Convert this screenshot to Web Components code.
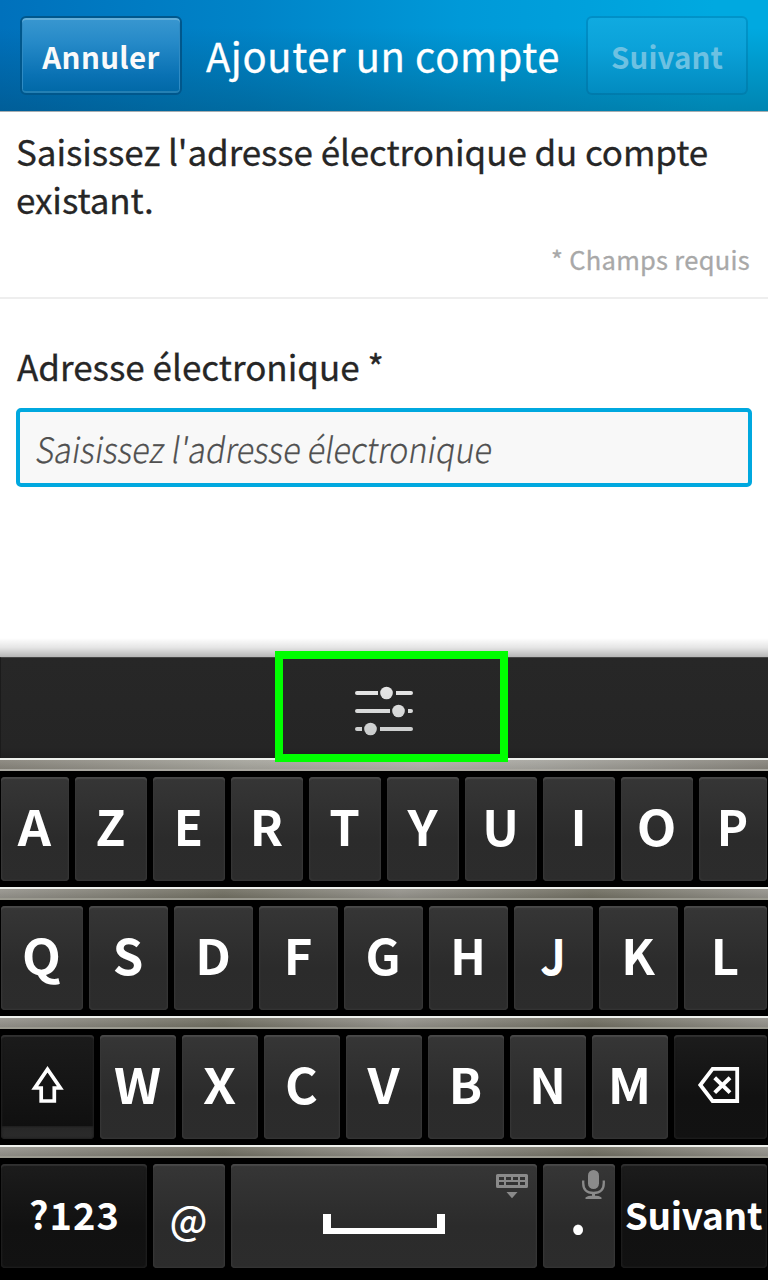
<!DOCTYPE html>
<html lang="fr">
<head>
<meta charset="utf-8">
<title>Ajouter un compte</title>
<style>
html,body{margin:0;padding:0}
body{width:768px;height:1280px;overflow:hidden;background:#fff;font-family:"Noto Sans CJK SC","Noto Sans",sans-serif;color:#262626}
</style>
</head>
<body>
<account-screen></account-screen>
<script>
const define = (name, html) => customElements.define(name, class extends HTMLElement {
  connectedCallback() {
    if (this.shadowRoot) return;
    const t = document.createElement('template');
    t.innerHTML = html;
    this.attachShadow({mode: 'open'}).append(t.content.cloneNode(true));
  }
});

define('title-action', `
<style>
:host{display:block;box-sizing:border-box;width:162px;height:79px;border:2px solid #00578c;border-radius:6px;
 background:linear-gradient(#3997d0,#268ac8 32%,#0a72b4 75%,#0068a6);
 box-shadow:inset 0 2px 0 #65afd9,inset 0 -2px 0 #2480b4,inset 1px 0 0 #2f8bc4,inset -1px 0 0 #2f8bc4}
div{height:75px;line-height:76px;text-align:center;font-size:29.5px;font-weight:700;color:#fafafa;letter-spacing:.35px;white-space:nowrap}
:host([disabled]){background:linear-gradient(#10aae0,#0ba2d9 40%,#028bc0) padding-box;box-shadow:none;border-color:rgba(0,92,140,.27)}
:host([disabled]) div{color:#6dc1e2;letter-spacing:.1px}
</style><div><slot></slot></div>`);

define('title-bar', `
<style>
:host{display:flex;box-sizing:border-box;height:112px;padding:16px 20px 0;justify-content:space-between;border-bottom:1px solid #a7adb0;
 background:linear-gradient(rgba(0,45,70,0) 25%,rgba(0,50,70,.3)),linear-gradient(90deg,#0071bc,#0084c8 33%,#0099d8 60%,#00a9e0 93%)}
h1{margin:0 2px 0 0;font-size:40px;line-height:79px;font-weight:400;color:#fff;white-space:nowrap;letter-spacing:.6px;-webkit-text-stroke:.3px #fff}
</style><slot name="left"></slot><h1><slot></slot></h1><slot name="right"></slot>`);

define('intro-text', `
<style>
:host{display:block;box-sizing:border-box;height:187px;padding:15px 16px 0;border-bottom:2px solid #eee}
p{margin:0;font-size:35px;line-height:48px;letter-spacing:-.09px;-webkit-text-stroke:.3px #262626}
small{display:block;margin:16px 2px 0 0;text-align:right;font-size:25.5px;line-height:40px;color:#a8a8a8;letter-spacing:.28px;-webkit-text-stroke:.3px #a8a8a8}
</style><p><slot></slot></p><small><slot name="note"></slot></small>`);

define('text-field', `
<style>
:host{display:block;padding:42px 16px 0}
label{display:block;font-size:35px;line-height:49px;padding-left:1px;-webkit-text-stroke:.3px #262626}
div{box-sizing:border-box;height:79px;margin-top:18px;border:4px solid #00a8df;border-radius:5px;background:#f8f8f8;padding:0 14px;line-height:72px;font-size:35px;font-weight:300;color:#505050;white-space:nowrap;-webkit-text-stroke:.2px #505050}
span{display:inline-block;transform:skewX(-9deg) scaleX(.922);transform-origin:0 72%}
</style><label><slot></slot></label><div><span><slot name="placeholder"></slot></span></div>`);

define('options-bar', `
<style>
:host{display:flex;position:relative;box-sizing:border-box;height:101px;background:linear-gradient(#272727,#252525 90%,#202020);border-top:1px solid #454545;border-left:1px solid #1b1b1b;justify-content:center}
svg{display:block;margin:25px 1px 0 0;width:58px;height:56px}
i{position:absolute;box-sizing:border-box;left:274px;top:-7px;width:233px;height:111px;border:8px solid #0f0;z-index:2}
</style>
<svg viewBox="355 683 58 56"><defs><linearGradient id="g" gradientUnits="userSpaceOnUse" x1="0" y1="686" x2="0" y2="736"><stop stop-color="#e6e6e6"/><stop offset="1" stop-color="#cacccc"/></linearGradient></defs>
<g fill="url(#g)"><path d="M357 691h21v4h-21a2 2 0 0 1 0-4zM396 691h15a2 2 0 0 1 0 4h-15zM357 709h33v4h-33a2 2 0 0 1 0-4zM408 709h3a2 2 0 0 1 0 4h-3zM357 727h5v4h-5a2 2 0 0 1 0-4zM380 727h31a2 2 0 0 1 0 4h-31z"/>
<circle cx="386.5" cy="693" r="6.3"/><circle cx="398.5" cy="711" r="6.3"/><circle cx="370.5" cy="729" r="6.3"/></g></svg><i></i>`);

define('key-row', `
<style>
:host{display:block;height:129px}
.metal{height:13px;box-sizing:border-box;border-top:2px solid #eef0ec;border-bottom:2px solid #9a998f;
 background:linear-gradient(rgba(255,255,255,.08),rgba(0,0,0,.07)),linear-gradient(90deg,#96948d,#716f62 29%,#96948d 52%,#716f62 77%,#96948d)}
:host([top]) .metal{background:linear-gradient(rgba(255,255,255,.08),rgba(0,0,0,.05)),linear-gradient(90deg,#86837a,#a5a49c 32%,#b2b0a9 55%,#a5a49e 70%,#86837b);border-bottom-color:#aaa8a1}
.keys{display:flex;gap:6px;height:104px;padding:6px 1px;background:#000}
</style><div class="metal"></div><div class="keys"><slot></slot></div>`);

define('key-cap', `
<style>
:host{display:block;position:relative;flex:none;box-sizing:border-box;height:104px;border-radius:4px;color:#fff;text-align:center;
 background:linear-gradient(#363636,#2b2b2b 60%,#2c2c2c);box-shadow:inset 0 2px 1px #484848,inset 0 0 2px 1px #373737}
:host([dark]){background:linear-gradient(#1c1c1c,#111 60%,#121212);box-shadow:inset 0 2px 1px #303030,inset 0 0 2px 1px #202020}
:host([shift]){background:linear-gradient(#1b1b1b,#101010 91px,#1d1d1d 91px,#282828 93px,#2b2b2b)}
div{transform:translate(var(--dx,-.5px),var(--dy,-2px)) scaleX(var(--sx,1));line-height:100px;height:104px;font-size:var(--size,49px);font-weight:var(--weight,700);letter-spacing:var(--track,0);white-space:nowrap}
::slotted(svg){position:absolute;left:0;top:0;width:100%;height:104px}
</style><div><slot></slot></div><slot name="art"></slot>`);

define('touch-keyboard', `
<style>
:host{display:block;position:relative;height:623px;background:#000}
:host::before{content:"";position:absolute;left:0;right:0;top:-19px;height:19px;background:linear-gradient(rgba(0,0,0,0),rgba(0,0,0,.1) 50%,rgba(0,0,0,.29))}
</style><options-bar></options-bar><slot></slot>`);

const stretch = {A: 1.06, W: 1.05, X: 1.08, V: 1.06, O: 1.05, Q: 1.03, Y: 1.06, M: 1.04, H: .96, D: 1.02, C: 1.02, P: .96, E: .97, J: .92};
const caps = (letters, widths) => [...letters].map((c, i) => `<key-cap style="width:${widths[i]}px;--sx:${stretch[c] || 1}">${c}</key-cap>`).join('');

define('account-screen', `
<style>
:host{display:flex;flex-direction:column;height:1280px;background:#fff}
main{height:545px}
</style>
<title-bar><title-action slot="left">Annuler</title-action>Ajouter un compte<title-action slot="right" disabled>Suivant</title-action></title-bar>
<main>
<intro-text>Saisissez l'adresse électronique du compte existant.<span slot="note">* Champs requis</span></intro-text>
<text-field>Adresse électronique *<span slot="placeholder">Saisissez l'adresse électronique</span></text-field>
</main>
<touch-keyboard>
<key-row top>${caps('AZERTYUIOP', [68,72,72,72,72,72,72,72,72,68])}</key-row>
<key-row>${caps('QSDFGHJKL', [82,79,79,79,79,79,79,79,83])}</key-row>
<key-row>
<key-cap dark shift style="width:93px"><svg slot="art" viewBox="1 1035 93 104"><path d="M47.5 1069.2L60.3 1088H54.3V1101H41.2V1088H34.8Z" fill="none" stroke="#fff" stroke-width="3.7"/></svg></key-cap>
${caps('WXCVBNM', Array(7).fill(76))}
<key-cap dark style="width:93px"><svg slot="art" viewBox="674 1035 93 104"><path d="M712.6 1068.9H737.2V1101H712.6L700.3 1085Z" fill="none" stroke="#fff" stroke-width="3.8"/><path d="M714.7 1077.7L730 1092.6M730 1077.7L714.7 1092.6" stroke="#fff" stroke-width="4"/></svg></key-cap>
</key-row>
<key-row>
<key-cap dark style="width:146px;--size:38px;--track:1.1px;--dx:.5px;--dy:0px">?123</key-cap>
<key-cap style="width:72px;--size:39px;--weight:500;--dy:3.5px">@</key-cap>
<key-cap style="width:306px"><svg slot="art" viewBox="231 1164 306 104"><path d="M323 1214h8v14h106v-14h8v20H323z" fill="#fff"/><g fill="#8a8a8a"><path fill-rule="evenodd" d="M497.5 1174h29q1.5 0 1.5 1.5v11q0 1.5-1.5 1.5h-29q-1.5 0-1.5-1.5v-11q0-1.5 1.5-1.5zM499 1177v3h5v-3zM506 1177v3h5v-3zM513 1177v3h5v-3zM520 1177v3h5v-3zM499 1182v3h5v-3zM506 1182v3h12v-3zM520 1182v3h5v-3z"/><path d="M506.5 1192h11l-5.5 6.3z"/></g></svg></key-cap>
<key-cap style="width:72px;--size:53px;--dx:-1px;--dy:-3.5px">.<svg slot="art" viewBox="543 1164 72 104"><g fill="#8a8a8a"><rect x="588" y="1170" width="11" height="19" rx="5.5"/><path d="M585.5 1197.5q2-2 8-2t8 2v1.5h-16zM592 1193h3v4h-3z"/></g><path d="M583.2 1180.500v2.500q0 10 10.300 10t10.300-10v-2.500" fill="none" stroke="#8a8a8a" stroke-width="2.300"/></svg></key-cap>
<key-cap dark style="width:146px;--size:37px;--track:-.3px;--dx:-.5px;--dy:0px">Suivant</key-cap>
</key-row>
</touch-keyboard>`);
</script>
</body>
</html>
